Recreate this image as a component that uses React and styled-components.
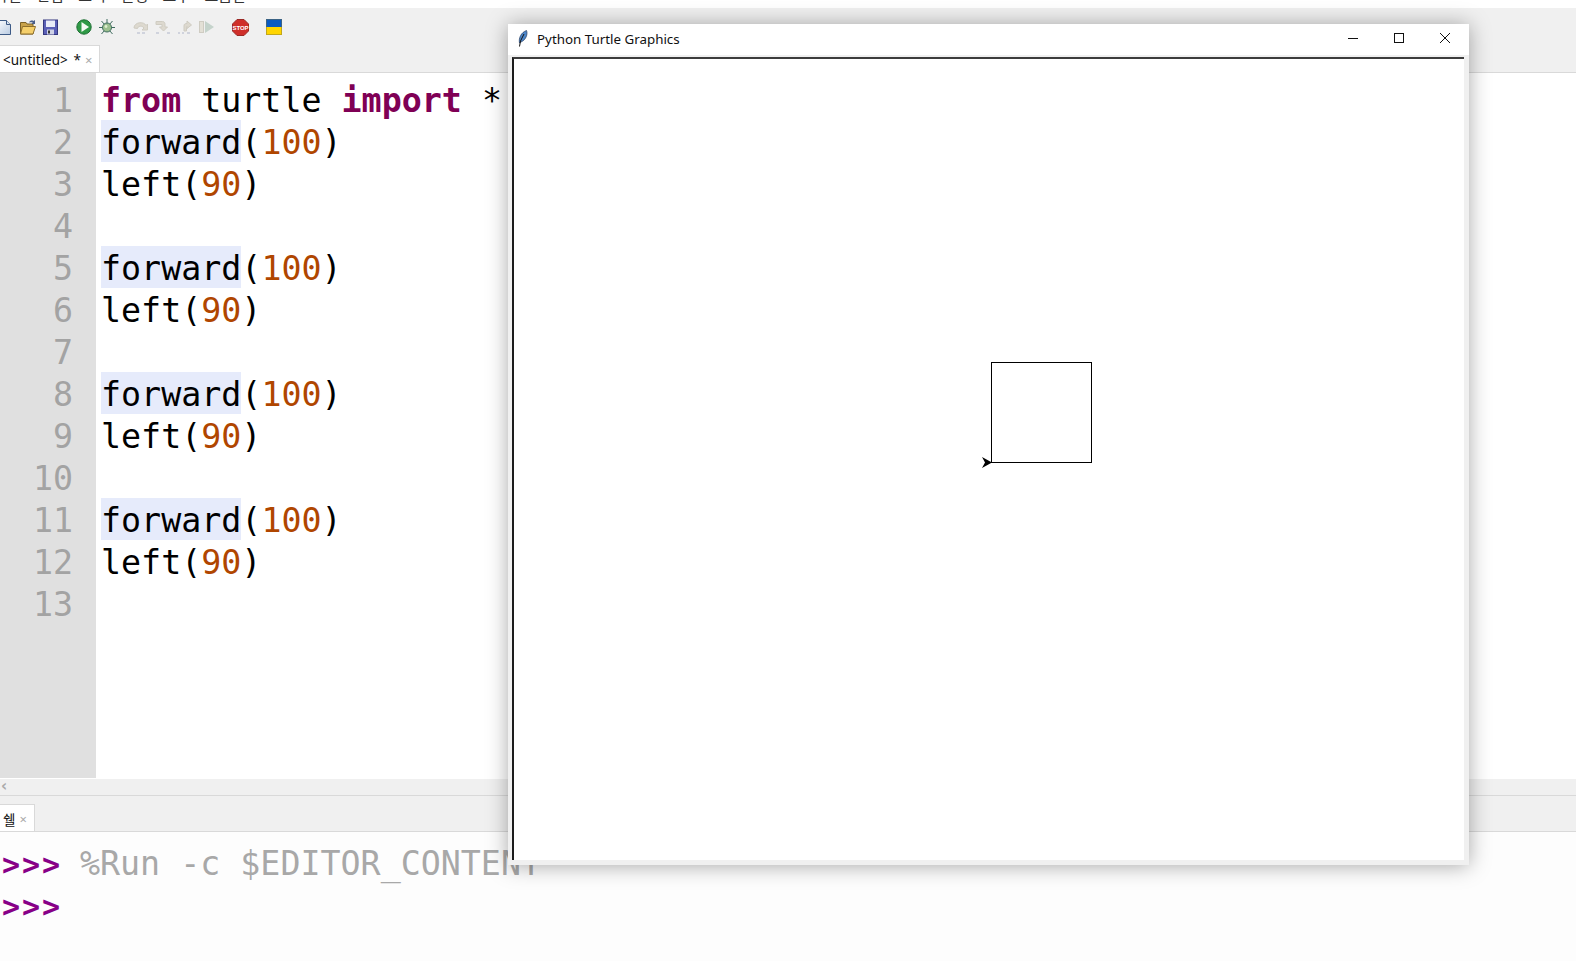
import React from "react";
import styled, { createGlobalStyle } from "styled-components";

const Global = createGlobalStyle`
  html, body { margin: 0; padding: 0; background: #fff; overflow: hidden; }
  #root { width: 1576px; height: 961px; }
`;

const Page = styled.div`
  position: relative;
  width: 1576px;
  height: 961px;
  overflow: hidden;
  display: flex;
  flex-direction: column;
  background: #fff;
  font-family: "Noto Sans", "Noto Sans CJK KR", sans-serif;
`;

const MenuBar = styled.div`
  height: 8px;
  flex: none;
  overflow: hidden;
  display: flex;
  align-items: flex-end;
  gap: 14.5px;
  background: #fff;
`;

const MenuItem = styled.span`
  flex: none;
  font: 15px/15px "Noto Sans CJK KR", sans-serif;
  color: #333;
  transform: translateY(-6px);
  margin-left: ${(p) => p.$ml || 0}px;
`;

const Toolbar = styled.div`
  height: 37px;
  flex: none;
  background: #f0f0f0;
  display: flex;
  align-items: center;
  padding-top: 1px;
  box-sizing: border-box;
`;

const ToolIcon = styled.svg`
  flex: none;
  width: ${(p) => p.$w || 16}px;
  height: ${(p) => p.$h || 16}px;
  margin-left: ${(p) => p.$ml || 0}px;
`;

const TabStrip = styled.div`
  flex: none;
  height: ${(p) => p.$h}px;
  background: #f0f0f0;
  border-bottom: 1px solid #d9d9d9;
  box-sizing: border-box;
  display: flex;
  align-items: flex-end;
`;

const Tab = styled.div`
  height: 27px;
  width: ${(p) => p.$w}px;
  box-sizing: border-box;
  background: #fff;
  border-right: 1px solid #d9d9d9;
  border-top: 1px solid #d9d9d9;
  display: flex;
  align-items: center;
  padding: 1px 0 0 3px;
  font: 13.5px "Noto Sans", "Noto Sans CJK KR", sans-serif;
  color: #111;
  white-space: pre;
`;

const TabClose = styled.span`
  color: #aaa;
  font-size: 13px;
  margin-left: ${(p) => p.$ml}px;
`;

const Editor = styled.div`
  flex: none;
  height: 706px;
  display: flex;
  background: #fff;
  padding-bottom: 1px;
  box-sizing: border-box;
`;

const Gutter = styled.div`
  width: 96px;
  flex: none;
  background: #e0e0e0;
  padding: 5px 23px 0 0;
  box-sizing: border-box;
  text-align: right;
  color: #a3a3a3;
`;

const CodeFont = `
  font-family: "DejaVu Sans Mono", monospace;
  font-size: 33.3px;
  line-height: 46px;
  height: 42px;
  white-space: pre;
`;

const LineNo = styled.div`${CodeFont}`;

const Code = styled.div`
  flex: 1;
  padding: 5px 0 0 5px;
  color: #000;
`;

const CodeLine = styled.div`${CodeFont}`;

const Keyword = styled.span`
  color: #7f0055;
  font-weight: 700;
`;

const Num = styled.span`
  color: #b04600;
`;

const Mark = styled.span`
  background: #e6ebfb;
  display: inline-block;
  height: 42px;
`;

const HScroll = styled.div`
  flex: none;
  height: 16px;
  background: #f0f0f0;
  border-bottom: 1px solid #d9d9d9;
  color: #aaa;
  font: 700 15px/14px "DejaVu Sans", sans-serif;
  padding-left: 1px;
`;

const Shell = styled.div`
  flex: 1;
  background: #fdfdfd;
  padding: 9px 0 0 0;
`;

const ShellLine = styled.div`
  ${CodeFont}
  color: #a8a8a8;
`;

const Prompt = styled.span`
  color: #870087;
  font-weight: 700;
  font-size: 30px;
  letter-spacing: 1.9px;
  margin-left: 2px;
  margin-right: -2px;
`;

const TurtleWindow = styled.div`
  position: absolute;
  left: 508px;
  top: 24px;
  width: 961px;
  height: 841px;
  background: #f0f0f0;
  box-shadow: 0 1px 20px rgba(0, 0, 0, 0.34);
  display: flex;
  flex-direction: column;
`;

const TitleBar = styled.div`
  height: 31px;
  flex: none;
  background: #fff;
  display: flex;
  align-items: center;
  padding: 0 1px 2px 9px;
  box-sizing: border-box;
  font: 13.35px "Noto Sans", sans-serif;
  color: #111;
`;

const TitleText = styled.span`
  margin-left: 8px;
  flex: 1;
`;

const WinButton = styled.svg`
  width: 46px;
  height: 29px;
  flex: none;
`;

const CanvasFrame = styled.div`
  flex: 1;
  margin: 2px 5px 5px 4px;
  border-top: 2px solid #3c3c3c;
  border-left: 2px solid #1c1c1c;
  background: #fff;
`;

const Drawing = styled.svg`
  display: block;
  width: 100%;
  height: 100%;
`;

const Document = () => (
  <ToolIcon $w={11} viewBox="0 0 11 16">
    <defs>
      <linearGradient id="docFill" x1="0" y1="0" x2="1" y2="1">
        <stop offset="0" stopColor="#ffffff" />
        <stop offset="1" stopColor="#b9cbe2" />
      </linearGradient>
    </defs>
    <path d="M-4 1.5H6.5L10.5 5.5V15.5H-4Z" fill="url(#docFill)" stroke="#3d5a86" />
    <path d="M6.5 1.5V5.5H10.5" fill="#d7e2f0" stroke="#3d5a86" />
  </ToolIcon>
);
const Folder = () => (
  <ToolIcon $ml={9} viewBox="0 0 16 16">
    <path d="M0.5 3.5H6L7 5H13V15H0.5Z" fill="#c9a24a" stroke="#7d6226" />
    <path d="M2.5 7.5H15.5L13 15H0.5Z" fill="#f5cf6b" stroke="#8d6f2d" />
    <path d="M9 3.5C10 1.5 12 1 13.5 2L15 1V5H11.5L12.8 3.6C11.6 3 10.5 3 9 3.5Z" fill="#4a5f8c" />
  </ToolIcon>
);
const Save = () => (
  <ToolIcon $w={15} $ml={7} viewBox="0 0 15 16">
    <rect x="0.5" y="1" width="14" height="14.5" fill="#5a5fb6" stroke="#34377e" />
    <rect x="3" y="1.5" width="9" height="6.5" fill="#e9ecf8" />
    <rect x="4" y="10.5" width="7" height="5" fill="#cfd2e6" />
    <rect x="5" y="11.5" width="2" height="3" fill="#333" />
  </ToolIcon>
);
const Run = () => (
  <ToolIcon $ml={18} viewBox="0 0 16 16">
    <circle cx="8" cy="8" r="7.2" fill="#2f9a46" stroke="#1e6f34" />
    <path d="M5.5 3L13 8L5.5 13Z" fill="#f6fbf4" />
  </ToolIcon>
);
const Bug = () => (
  <ToolIcon $ml={7} viewBox="0 0 16 16">
    <g stroke="#3e6b5e" strokeWidth="1" fill="none">
      <path d="M8 0V4M2.5 2L5.5 5.5M13.5 2L10.5 5.5M0 8.5H4M12 8.5H16M2.5 15L5.5 11.5M13.5 15L10.5 11.5" />
    </g>
    <circle cx="8" cy="8.5" r="4.5" fill="#9cc08f" stroke="#3e6b5e" />
    <circle cx="7" cy="7.5" r="1.4" fill="#dfeecf" />
  </ToolIcon>
);
const StepOver = () => (
  <ToolIcon $ml={18} viewBox="0 0 16 16">
    <path d="M1 9C1 3 11 2 13 6.5L14.5 5V11H9L11 9C9 6 5 7 4.5 9.5Z" fill="#ddd9cf" stroke="#cfccc2" />
    <path d="M4 14H7M9 14H12" stroke="#c5c9d6" strokeWidth="1.5" />
  </ToolIcon>
);
const StepInto = () => (
  <ToolIcon $ml={6} viewBox="0 0 16 16">
    <path d="M1 2.5H7.5C9.5 2.5 10 4 10 5.5V8H12.5L8.5 12L4.5 8H7V5.5H1Z" fill="#ddd9cf" stroke="#cfccc2" />
    <path d="M1 14H4M12 14H15" stroke="#c5c9d6" strokeWidth="1.5" />
  </ToolIcon>
);
const StepOut = () => (
  <ToolIcon $ml={6} viewBox="0 0 16 16">
    <path d="M7 12V7C7 5 8 4.5 10 4.5V2L14.5 6L10 9.5V7.5C9.5 7.5 9.5 8 9.5 9V12Z" fill="#ddd9cf" stroke="#cfccc2" />
    <path d="M1 14H3M5 14H7M10 14H13" stroke="#c5c9d6" strokeWidth="1.5" />
  </ToolIcon>
);
const Resume = () => (
  <ToolIcon $ml={6} viewBox="0 0 16 16">
    <rect x="0.5" y="2.5" width="4" height="11" fill="#e3e0d6" stroke="#cfccc2" />
    <path d="M6 2L15 8L6 14Z" fill="#c5d3cb" />
  </ToolIcon>
);
const Stop = () => (
  <ToolIcon $w={17} $h={17} $ml={17} viewBox="0 0 17 17">
    <path d="M5 .5H12L16.5 5V12L12 16.5H5L.5 12V5Z" fill="#cf2f2a" stroke="#9a2a26" />
    <text x="8.5" y="10.8" textAnchor="middle" fontSize="6" fontWeight="700" fontFamily="Liberation Sans" fill="#fff">STOP</text>
  </ToolIcon>
);
const Flag = () => (
  <ToolIcon $ml={17} viewBox="0 0 16 16">
    <rect x="0" y="0" width="16" height="8" fill="#0a5ac2" />
    <rect x="0" y="8" width="16" height="8" fill="#ffd500" />
    <rect x="0.5" y="0.5" width="15" height="15" fill="none" stroke="rgba(120,110,60,.45)" />
  </ToolIcon>
);

const Feather = () => (
  <svg width="12" height="18" viewBox="0 0 12 18">
    <path d="M2.5 13C1.5 8 4 2.5 9.5 0.5C11 4 9 10 4 12Z" fill="#4b86c9" stroke="#223a5e" strokeWidth=".7" />
    <path d="M2.5 16.5L3.5 11L7 4" fill="none" stroke="#111" strokeWidth="1" />
  </svg>
);

const editorLines = [
  <><Keyword>from</Keyword> turtle <Keyword>import</Keyword> *</>,
  <><Mark>forward</Mark>(<Num>100</Num>)</>,
  <>left(<Num>90</Num>)</>,
  null,
  <><Mark>forward</Mark>(<Num>100</Num>)</>,
  <>left(<Num>90</Num>)</>,
  null,
  <><Mark>forward</Mark>(<Num>100</Num>)</>,
  <>left(<Num>90</Num>)</>,
  null,
  <><Mark>forward</Mark>(<Num>100</Num>)</>,
  <>left(<Num>90</Num>)</>,
  null,
];

const menus = ["파일", "편집", "보기", "실행", "도구", "도움말"];

export default function App() {
  return (
    <Page>
      <Global />
      <MenuBar>
        {menus.map((m, i) => (
          <MenuItem key={m} $ml={i === 0 ? -6 : 0}>{m}</MenuItem>
        ))}
      </MenuBar>
      <Toolbar>
        <Document /><Folder /><Save /><Run /><Bug />
        <StepOver /><StepInto /><StepOut /><Resume /><Stop /><Flag />
      </Toolbar>
      <TabStrip $h={28}>
        <Tab $w={100}>
          {"<untitled> \u2009*"}
          <TabClose $ml={4}>×</TabClose>
        </Tab>
      </TabStrip>
      <Editor>
        <Gutter>
          {editorLines.map((_, i) => (
            <LineNo key={i}>{i + 1}</LineNo>
          ))}
        </Gutter>
        <Code>
          {editorLines.map((l, i) => (
            <CodeLine key={i}>{l}</CodeLine>
          ))}
        </Code>
      </Editor>
      <HScroll>‹</HScroll>
      <TabStrip $h={36}>
        <Tab $w={35}>
          쉘<TabClose $ml={4}>×</TabClose>
        </Tab>
      </TabStrip>
      <Shell>
        <ShellLine><Prompt>&gt;&gt;&gt;</Prompt> %Run -c $EDITOR_CONTENT</ShellLine>
        <ShellLine><Prompt>&gt;&gt;&gt;</Prompt></ShellLine>
      </Shell>
      <TurtleWindow>
        <TitleBar>
          <Feather />
          <TitleText>Python Turtle Graphics</TitleText>
          <WinButton viewBox="0 0 46 29">
            <path d="M18 14.5H28" stroke="#111" strokeWidth="1" />
          </WinButton>
          <WinButton viewBox="0 0 46 29">
            <rect x="18.5" y="9.5" width="9" height="9" fill="none" stroke="#111" />
          </WinButton>
          <WinButton viewBox="0 0 46 29">
            <path d="M18 9L28 19M28 9L18 19" stroke="#111" strokeWidth="1" />
          </WinButton>
        </TitleBar>
        <CanvasFrame>
          <Drawing viewBox="0 0 950 801">
            <rect x="477.5" y="303.5" width="100" height="100" fill="none" stroke="#000" strokeWidth="1" shapeRendering="crispEdges" />
            <path d="M478 403.5L468 398L471 403.5L468 409Z" fill="#000" />
          </Drawing>
        </CanvasFrame>
      </TurtleWindow>
    </Page>
  );
}
